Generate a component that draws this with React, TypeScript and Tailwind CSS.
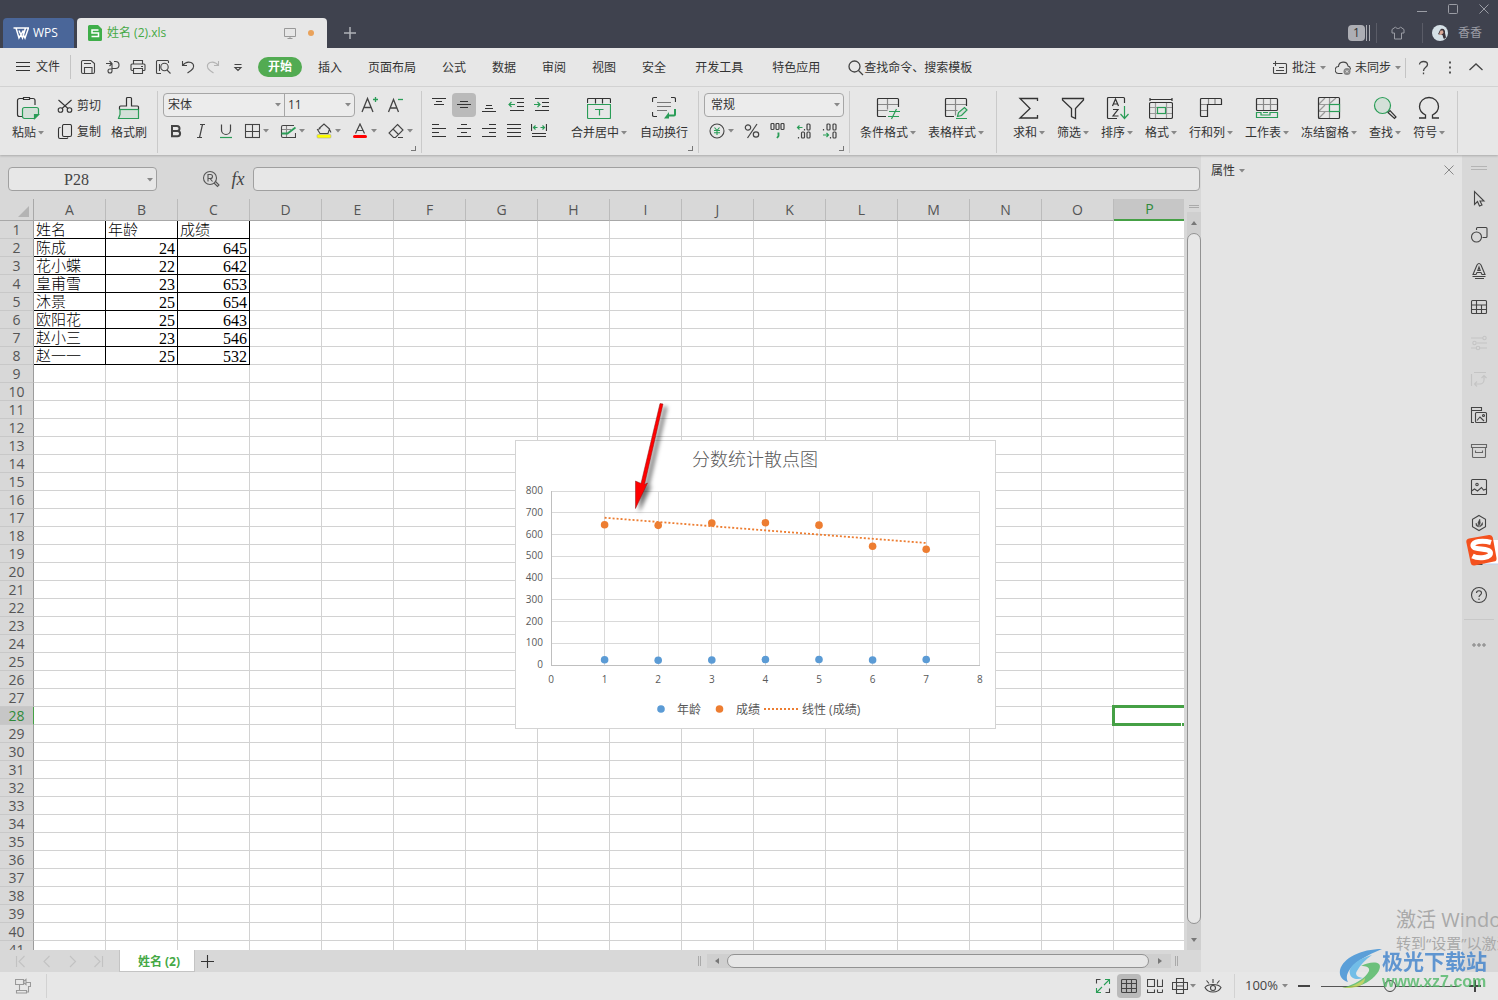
import type { ReactNode } from "react";
import clsx from "clsx";

const GREEN = "#2a9d57";

const tabs = ["插入", "页面布局", "公式", "数据", "审阅", "视图", "安全"];
const extraTabs = ["开发工具", "特色应用"];

const columns = "ABCDEFGHIJKLMNOP".split("");
const rowNumbers = Array.from({ length: 41 }, (_, i) => i + 1);

const records = [
  ["姓名", "年龄", "成绩"],
  ["陈成", 24, 645],
  ["花小蝶", 22, 642],
  ["皇甫雪", 23, 653],
  ["沐景", 25, 654],
  ["欧阳花", 25, 643],
  ["赵小三", 23, 546],
  ["赵一一", 25, 532],
];

type IconProps = { w?: number; h?: number; sw?: number; className?: string; children: ReactNode };

function Icon({ w = 16, h = 16, sw = 1.1, className, children }: IconProps) {
  return (
    <svg
      width={w}
      height={h}
      viewBox={`0 0 ${w} ${h}`}
      fill="none"
      stroke="currentColor"
      strokeWidth={sw}
      className={clsx("shrink-0", className)}
      aria-hidden="true"
    >
      {children}
    </svg>
  );
}

function Caret() {
  return (
    <svg width="6" height="4" viewBox="0 0 6 4" className="shrink-0 text-[#888]" aria-hidden="true">
      <path d="M0 0h6L3 3.5z" fill="currentColor" />
    </svg>
  );
}

/* ---------- ribbon icons, 24 x 24 ---------- */

const big = {
  paste: (
    <Icon w={24} h={24} sw={1.2}>
      <path d="M7 2.5H3.5a2 2 0 0 0-2 2v14a2 2 0 0 0 2 2H6M14 2.5h3a2 2 0 0 1 2 2V9M7.5 1.5h6v2h-6z" />
      <path d="M8.5 11.5h12a2 2 0 0 1 2 2v5l-4 4h-10a2 2 0 0 1-2-2v-7a2 2 0 0 1 2-2z" stroke={GREEN} fill="#d3e0d8" />
      <path d="M22.5 18.5h-4v4z" stroke={GREEN} fill={GREEN} />
    </Icon>
  ),
  brush: (
    <Icon w={24} h={24} sw={1.2}>
      <path d="M3 13v5.5L1.5 22.5h20V13" stroke={GREEN} fill="#d3e0d8" />
      <path d="M2.5 13.5V11a1 1 0 0 1 1-1h6V2.500a1 1 0 0 1 1-1h3a1 1 0 0 1 1 1V10h6a1 1 0 0 1 1 1v2.500" />
      <path d="M2.5 13.5h19" stroke={GREEN} />
    </Icon>
  ),
  merge: (
    <Icon w={24} h={24} sw={1.2}>
      <path d="M0.5 7V3.5a1 1 0 0 1 1-1h21a1 1 0 0 1 1 1V7M8.5 2.5v5M15.5 2.5v5" />
      <path d="M0.5 8.5h23v13a1 1 0 0 1-1 1h-21a1 1 0 0 1-1-1zM8 13.500h8.500M12.500 13.500v6" stroke={GREEN} />
    </Icon>
  ),
  wrap: (
    <Icon w={24} h={24} sw={1.2}>
      <path d="M0.500 6V3a1.500 1.500 0 0 1 1.500-1.500h3M19 1.500h3A1.500 1.500 0 0 1 23.500 3v3M0.500 16v3A1.500 1.500 0 0 0 2 20.500h3" />
      <path d="M5 6.500h14M5 10.500h14M5 14.500h10" stroke="#777" />
      <path d="M23 13v5.500a1 1 0 0 1-1 1h-6" stroke={GREEN} strokeWidth="2" />
      <path d="M17 16v6.500h-5z" fill={GREEN} stroke="none" />
    </Icon>
  ),
  condition: (
    <Icon w={24} h={24} sw={1.2}>
      <path d="M1.500 8.500h21M11.500 2.500v11M1.500 14.500h10" stroke="#888" />
      <path d="M10 20.500H2.500a1 1 0 0 1-1-1v-16a1 1 0 0 1 1-1h19a1 1 0 0 1 1 1V11" />
      <path d="M13 15.500h11M12 20.500h11M20.500 13l-5 10" stroke={GREEN} />
    </Icon>
  ),
  tableStyle: (
    <Icon w={24} h={24} sw={1.2}>
      <path d="M11.500 2.500v17M1.500 8.500h21M1.500 14.500h12" stroke="#888" />
      <path d="M10 20.500H2.500a1 1 0 0 1-1-1v-16a1 1 0 0 1 1-1h19a1 1 0 0 1 1 1V10" />
      <path d="M13.500 20.500l1-4 6-5 2.500 2.500-5.500 5.500zM12 22.500h11" stroke={GREEN} fill="#d3e0d8" />
    </Icon>
  ),
  sum: (
    <Icon w={24} h={24} sw={1.3}>
      <path d="M20.500 5V2.500H3l10 10-10 9.500h17.500V19" />
    </Icon>
  ),
  filter: (
    <Icon w={24} h={24} sw={1.3}>
      <path d="M1.500 2.500h21v1.500l-8 8.500v10l-4-2v-8L1.500 4z" />
    </Icon>
  ),
  sort: (
    <Icon w={24} h={24} sw={1.2}>
      <path d="M12 22.500H3.500a1 1 0 0 1-1-1v-19a1 1 0 0 1 1-1h15a1 1 0 0 1 1 1V7" />
      <path d="M7.500 10l3-7 3 7M8.500 8h4M8 13.500h5l-5 6.500h5.500" />
      <path d="M19.500 10v12M15.500 18l4 4.500 4-4.500" stroke={GREEN} />
    </Icon>
  ),
  format: (
    <Icon w={24} h={24} sw={1.2}>
      <path d="M6.500 7v15M17.500 7v15M1 11.500h22M1 17.500h22" stroke="#999" />
      <path d="M1 3.500h22M1 2v3M23 2v3" />
      <rect x="0.500" y="6.500" width="23" height="16" rx="1.500" />
      <rect x="8.500" y="11.500" width="8" height="6" stroke={GREEN} fill="#e7e7e7" />
    </Icon>
  ),
  rowCol: (
    <Icon w={24} h={24} sw={1.2}>
      <path d="M9.500 2.500v6M16 2.500v6M1.500 8.500h7M1.500 14.500h7" stroke="#888" />
      <path d="M2.500 2.500h19a1 1 0 0 1 1 1v5h-14v12h-6a1 1 0 0 1-1-1v-16a1 1 0 0 1 1-1z" />
    </Icon>
  ),
  worksheet: (
    <Icon w={24} h={24} sw={1.2}>
      <path d="M8.500 2.500v12M15.500 2.500v12M1.500 8.500h21" stroke="#888" />
      <rect x="1.500" y="2.500" width="21" height="12" rx="1" />
      <path d="M1.500 16.500H6v2.500h9v-2.500h7.500v5h-21zM8 16.500h5" stroke={GREEN} />
    </Icon>
  ),
  freeze: (
    <Icon w={24} h={24} sw={1.2}>
      <path d="M12.500 1.500v21M1.500 8.500h21M1.500 15.500h21M2 8l6-6M12 8l7-6M2 15l6-6M2 22l6-6" stroke="#999" />
      <rect x="1.500" y="1.500" width="21" height="21" rx="1" />
      <rect x="12.500" y="8.500" width="10" height="7" stroke={GREEN} fill="#e7e7e7" />
    </Icon>
  ),
  find: (
    <Icon w={24} h={24} sw={1.2}>
      <path d="M15 16.500l6.500 6 1.500-1.500-6-6.500z" />
      <circle cx="9.500" cy="9.500" r="8" stroke={GREEN} fill="#d3e0d8" />
    </Icon>
  ),
  symbol: (
    <Icon w={24} h={24} sw={1.3}>
      <path d="M2 22h6.500v-3C4.500 17 2.500 14 2.500 10.500a9.500 9 0 0 1 19 0c0 3.500-2 6.500-6 8.500v3H22" />
    </Icon>
  ),
};

/* ---------- small toolbar icons, 16 x 16 ---------- */

const small = {
  save: (
    <Icon>
      <path d="M3 1.500h8l3.500 3V13a1.500 1.500 0 0 1-1.500 1.500H3A1.500 1.500 0 0 1 1.500 13V3A1.500 1.500 0 0 1 3 1.500z" />
      <path d="M4.500 14.500v-6h7.500v6M4 4.500h7" />
    </Icon>
  ),
  output: (
    <Icon>
      <path d="M1 4.500h6M4.500 2L7 4.500 4.500 7M9 2.500h1.500a3.500 3.500 0 0 1 0 7H7v2.500a2 2 0 1 1-2-2h2V5" />
    </Icon>
  ),
  print: (
    <Icon>
      <path d="M3.500 5V1.500h9V5M3.500 11.500H2A1 1 0 0 1 1 10.500V6a1 1 0 0 1 1-1h12a1 1 0 0 1 1 1v4.500a1 1 0 0 1-1 1h-1.500" />
      <path d="M3.500 9.500h9v5h-9zM11 7.500h2" />
    </Icon>
  ),
  preview: (
    <Icon>
      <path d="M6 14.500H2.500a1 1 0 0 1-1-1v-11a1 1 0 0 1 1-1h10a1 1 0 0 1 1 1V4M4.500 12V5" />
      <circle cx="9.500" cy="8" r="3.700" />
      <path d="M12 11l3.500 3.500" />
    </Icon>
  ),
  undo: (
    <Icon>
      <path d="M2.500 2v4.500H7M2.500 6.500C5 3.500 8 2.500 11 3.500c3.500 1.500 3.500 5.500 0 8l-3.500 2.500" />
    </Icon>
  ),
  redo: (
    <Icon className="text-[#b4b4b4]">
      <path d="M13.500 2v4.500H9M13.500 6.500C11 3.500 8 2.500 5 3.500c-3.500 1.500-3.500 5.500 0 8l3.500 2.500" />
    </Icon>
  ),
  more: (
    <Icon>
      <path d="M4.500 5.500h7M5 8.500l3 3 3-3z" />
    </Icon>
  ),
  cut: (
    <Icon>
      <circle cx="3.500" cy="12" r="2.300" />
      <circle cx="12.500" cy="12" r="2.300" />
      <path d="M1.500 2l9.500 8.500M14.500 2L5 10.500" />
    </Icon>
  ),
  copy: (
    <Icon>
      <rect x="5.500" y="0.500" width="9" height="12" rx="1.500" />
      <path d="M3.500 3.500H3A1.500 1.500 0 0 0 1.500 5v8A1.500 1.500 0 0 0 3 14.500h6.500a1.500 1.500 0 0 0 1.500-1" />
    </Icon>
  ),
  bold: (
    <Icon sw={2}>
      <path d="M4 3h5a2.400 2.400 0 0 1 0 5H4zM4 8h5.500a2.500 2.500 0 0 1 0 5.200H4z" />
    </Icon>
  ),
  italic: (
    <Icon sw={1.2}>
      <path d="M7 1.500h5M4 14.500h5M9.500 1.500l-3 13" />
    </Icon>
  ),
  underline: (
    <Icon sw={1.2}>
      <path d="M3.500 1.500V7a4.500 4.500 0 0 0 9 0V1.500" />
      <path d="M2 14.500h12" stroke={GREEN} />
    </Icon>
  ),
  borders: (
    <Icon>
      <rect x="1.500" y="1.500" width="14" height="13" />
      <path d="M8.500 1.500v13M1.500 8.500h14" />
    </Icon>
  ),
  drawBorder: (
    <Icon>
      <path d="M6.500 2v12M1.500 6.500H11" stroke="#888" />
      <path d="M14 2.500H3A1.500 1.500 0 0 0 1.500 4v9a1.500 1.500 0 0 0 1.500 1.500h12.500V10" />
      <path d="M1.500 10.500h6l8-6" stroke={GREEN} strokeWidth="1.800" />
    </Icon>
  ),
  fill: (
    <Icon>
      <path d="M3 5.500l5-4.500 5.500 5L12 10.500H4L1.500 6.500l3-1M13.500 6.500l1.500 3" />
      <rect x="1" y="11.500" width="14" height="3.500" rx="1" fill="#ff0" stroke="#aaa" strokeWidth="0.600" />
    </Icon>
  ),
  fontColor: (
    <Icon sw={1.2}>
      <path d="M3.500 10.500L8 1l4.500 9.500M5 7.500h6" />
      <rect x="1" y="12" width="14" height="3" rx="1.500" fill="#f00" stroke="none" />
    </Icon>
  ),
  eraser: (
    <Icon>
      <path d="M9.500 1.500l5.500 5.500-7.500 7.500h-2L1 10zM5 6l5.500 5.500M10 14.500h5" />
    </Icon>
  ),
  yen: (
    <Icon>
      <circle cx="8" cy="8" r="7" />
      <path d="M5.500 4.500L8 7.500l2.500-3M8 7.500V12M5 7.500h6M5 9.800h6" stroke={GREEN} />
    </Icon>
  ),
  percent: (
    <Icon sw={1.2}>
      <circle cx="4" cy="4.500" r="2.700" />
      <circle cx="12" cy="11.500" r="2.700" />
      <path d="M13 1L3.500 15" />
    </Icon>
  ),
  thousands: (
    <Icon sw={1.2}>
      <rect x="1" y="0.500" width="3" height="6" rx="1" />
      <rect x="6" y="0.500" width="3" height="6" rx="1" />
      <rect x="11" y="0.500" width="3" height="6" rx="1" />
      <path d="M7.500 10.500h1v2.500l-1.500 2" stroke={GREEN} strokeWidth="1.800" />
    </Icon>
  ),
  addDecimal: (
    <Icon sw={1.2}>
      <path d="M1.500 4.500h5M3.500 2.500l-2 2 2 2" stroke={GREEN} />
      <path d="M8.500 6v1.500M2.500 14v1.500" />
      <rect x="11" y="1" width="3" height="6" rx="1" />
      <rect x="5.500" y="9" width="3" height="6" rx="1" />
      <rect x="11" y="9" width="3" height="6" rx="1" />
    </Icon>
  ),
  cutDecimal: (
    <Icon sw={1.2}>
      <path d="M1 12h5.500M4.500 10l2 2-2 2" stroke={GREEN} />
      <path d="M1.500 6v1.500M8.500 14v1.500" />
      <rect x="5" y="1" width="3" height="6" rx="1" />
      <rect x="11" y="1" width="3" height="6" rx="1" />
      <rect x="11" y="9" width="3" height="6" rx="1" />
    </Icon>
  ),
};

const line = (d: string, green?: string) => (
  <Icon sw={1.2}>
    <path d={d} />
    {green && <path d={green} stroke={GREEN} />}
  </Icon>
);

const alignTop = [
  { name: "顶端对齐", icon: line("M1 1.500h14M5 4.500h6M3 7.500h10") },
  { name: "垂直居中", icon: line("M1 7.500h14M4 4.500h8M4 10.500h8"), active: true },
  { name: "底端对齐", icon: line("M5 8.500h6M4 11.500h8M1 14.500h14") },
];

const indents = [
  { name: "减少缩进", icon: line("M2 1.500h14M9 5.500h7M9 9.500h7M2 13.500h14", "M1 7.500h6M3.500 5L1 7.500l2.500 2.500") },
  { name: "增加缩进", icon: line("M2 1.500h14M9 5.500h7M9 9.500h7M2 13.500h14", "M1 7.500h6M4.500 5L7 7.500l-2.500 2.500") },
];

const alignBottom = [
  { name: "左对齐", icon: line("M1 1.500h7M1 5.500h14M1 9.500h7M1 13.500h14") },
  { name: "水平居中", icon: line("M5 1.500h6M1 5.500h14M5 9.500h6M1 13.500h14") },
  { name: "右对齐", icon: line("M8 1.500h7M1 5.500h14M8 9.500h7M1 13.500h14") },
  { name: "两端对齐", icon: line("M1 1.500h14M1 5.500h14M1 9.500h14M1 13.500h14") },
  { name: "分散对齐", icon: line("M0.500 1v7M15.500 1v7M1 10.500h14M1 13.500h14", "M2.500 4.500h4M9.500 4.500h4M4.500 2.500l-2 2 2 2M11.500 2.500l2 2-2 2") },
];

const quickAccess = [
  { name: "保存", icon: small.save },
  { name: "输出", icon: small.output },
  { name: "打印", icon: small.print },
  { name: "打印预览", icon: small.preview },
  { name: "撤销", icon: small.undo },
  { name: "恢复", icon: small.redo },
  { name: "更多", icon: small.more },
];

const fontTools = [
  { name: "边框", icon: small.borders },
  { name: "绘制边框", icon: small.drawBorder },
  { name: "填充颜色", icon: small.fill },
  { name: "字体颜色", icon: small.fontColor },
  { name: "清除", icon: small.eraser },
];

const editTools = [
  { label: "求和", icon: big.sum },
  { label: "筛选", icon: big.filter },
  { label: "排序", icon: big.sort },
  { label: "格式", icon: big.format },
  { label: "行和列", icon: big.rowCol },
  { label: "工作表", icon: big.worksheet },
  { label: "冻结窗格", icon: big.freeze },
  { label: "查找", icon: big.find },
  { label: "符号", icon: big.symbol },
];

function TitleBar() {
  return (
    <header className="flex h-12 shrink-0 items-end bg-[#3f424e] pl-[3px] text-xs">
      <button className="flex h-[30px] w-[71px] items-center gap-1 rounded-t bg-[#4a6699] pl-2.5 text-white">
        <Icon w={16} h={14} sw={1.5}>
          <path d="M0.500 2h12L9.500 12 6 4.500M3 2l3 10 4.500-7.500M12 2h3.500L12 12l-2-4" />
        </Icon>
        WPS
      </button>
      <div className="ml-[3px] flex h-[30px] w-[250px] items-center rounded-t bg-[#e7e7e7] pr-[13px] pl-[11px] text-[#45a945]">
        <svg width="14" height="16" viewBox="0 0 14 16" aria-hidden="true">
          <path d="M1.500 0H10l4 4v10.500a1.500 1.500 0 0 1-1.500 1.500h-11A1.500 1.500 0 0 1 0 14.500v-13A1.500 1.500 0 0 1 1.500 0z" fill="#3fae49" />
          <path d="M10.500 5H4v3h6.500v3.500H3.500" fill="none" stroke="#fff" strokeWidth="1.500" />
        </svg>
        <span className="ml-[5px] flex-1">姓名 (2).xls</span>
        <Icon w={12} h={12} sw={1} className="text-[#999]">
          <path d="M0.500 1.500h11v8H0.500zM6 9.500v2M3.500 11.500h5" />
        </Icon>
        <span className="ml-3 size-1.5 rounded-full bg-[#e9a25b]" />
      </div>
      <button aria-label="新建" className="ml-4 flex h-[30px] items-center text-[#b0b2b8]">
        <Icon w={14} h={14} sw={1.5}>
          <path d="M7 1v12M1 7h12" />
        </Icon>
      </button>

      <div className="ml-auto flex h-12 flex-col text-[#9b9da5]">
        <div className="flex h-[18px] items-center justify-end gap-[21px] pr-[9px]">
          <button aria-label="最小化">
            <Icon w={10} h={10} sw={1}>
              <path d="M0 7.500h10" />
            </Icon>
          </button>
          <button aria-label="最大化">
            <Icon w={10} h={10} sw={1}>
              <rect x="0.500" y="0.500" width="9" height="9" rx="1" />
            </Icon>
          </button>
          <button aria-label="关闭">
            <Icon w={10} h={10} sw={1}>
              <path d="M0.500 0.500l9 9M9.500 0.500l-9 9" />
            </Icon>
          </button>
        </div>
        <div className="flex h-[30px] items-center pr-4">
          <span className="flex h-4 w-[17px] items-center justify-center rounded-sm bg-[#adaeb4] text-[#333]">1</span>
          <span className="ml-px h-4 w-1 border-x border-[#adaeb4]" />
          <span className="ml-1.5 h-5 w-px bg-[#5a5c67]" />
          <button aria-label="皮肤" className="ml-3.5">
            <Icon w={14} h={14} sw={1}>
              <path d="M4.500 1L1 3.500V7h2.500v6h7V7H13V3.500L9.500 1C8.500 3 5.500 3 4.500 1z" />
            </Icon>
          </button>
          <span className="ml-[17px] h-5 w-px bg-[#5a5c67]" />
          <button className="ml-[9px] flex items-center gap-2.5">
            <svg width="16" height="16" viewBox="0 0 16 16" aria-hidden="true">
              <circle cx="8" cy="8" r="8" fill="#d5e0e6" />
              <path d="M9 4c2.500-1 4.500 1 4 4l1 4.500-2 1.500c-1-1-1-3-1.500-4L7 9.500 6 9c1-1 1.500-4 3-5z" fill="#3a3238" />
              <path d="M8.500 5.500l2.500 0 .5 2.500-2.500 2-2-.5z" fill="#d9a795" />
            </svg>
            香香
          </button>
        </div>
      </div>
    </header>
  );
}

function MenuBar() {
  return (
    <nav className="flex h-[39px] shrink-0 items-center border-b border-[#d6d6d6] bg-[#e7e7e7] pl-4 text-xs">
      <button className="flex items-center gap-1.5">
        <Icon w={14} h={12}>
          <path d="M0 1.500h14M0 5.500h14M0 9.500h14" />
        </Icon>
        文件
      </button>
      <span className="ml-2.5 h-6 w-px bg-[#c4c4c4]" />
      <div className="ml-1 flex">
        {quickAccess.map(({ name, icon }) => (
          <button key={name} aria-label={name} className="flex h-6 w-[25px] items-center justify-center text-[#444]">
            {icon}
          </button>
        ))}
      </div>
      <button className="ml-2 h-5 w-11 rounded-full bg-[#52ab52] font-bold text-white">开始</button>
      <div className="ml-4 flex gap-[26px] pt-0.5 whitespace-nowrap">
        {tabs.map((tab) => (
          <button key={tab}>{tab}</button>
        ))}
      </div>
      <div className="ml-[29px] flex gap-[29px] pt-0.5 whitespace-nowrap">
        {extraTabs.map((tab) => (
          <button key={tab}>{tab}</button>
        ))}
      </div>
      <label className="ml-7 flex items-center pt-0.5">
        <Icon sw={1.3} className="text-[#444]">
          <circle cx="6.500" cy="6.500" r="5.500" />
          <path d="M10.500 10.500l4.500 4.500" />
        </Icon>
        <input
          aria-label="查找命令"
          placeholder="查找命令、搜索模板"
          className="w-32 bg-transparent outline-none placeholder:text-[#333]"
        />
      </label>
      <div className="ml-auto flex items-center pt-0.5 pr-[15px]">
        <button className="flex items-center gap-1">
          <Icon className="text-[#444]">
            <path d="M6 3.500h7.500a1 1 0 0 1 1 1v8a1 1 0 0 1-1 1h-11a1 1 0 0 1-1-1V7M3.500 1v5M1 3.500h5M4 10.500h8M7 7.500h5" />
          </Icon>
          批注
          <Caret />
        </button>
        <button className="ml-[9px] flex items-center gap-1">
          <Icon className="text-[#444]">
            <path d="M7.500 13.500H4a3.500 3.500 0 0 1-.5-7A4.800 4.800 0 0 1 13 6c2 .5 2.500 2 2.500 3.500" />
            <circle cx="12" cy="11.500" r="3.500" fill="#888" stroke="none" />
            <path d="M10.800 10.300l2.400 2.400M13.200 10.300l-2.400 2.400" stroke="#fff" strokeWidth="0.800" />
          </Icon>
          未同步
          <Caret />
        </button>
        <span className="ml-1 h-5 w-px bg-[#c4c4c4]" />
        <button aria-label="帮助" className="ml-2.5">
          <Icon sw={1.3} className="text-[#444]">
            <path d="M3.500 4.500C3.500 0.500 11.500 0.500 11.500 4.500 11.500 7.500 7.500 7 7.500 11M7.500 12.500v1.800" />
          </Icon>
        </button>
        <button aria-label="更多选项" className="ml-2.5">
          <Icon className="text-[#444]">
            <path d="M8 1.500v2M8 6.500v2M8 11.500v2" strokeWidth="1.800" />
          </Icon>
        </button>
        <button aria-label="折叠功能区" className="ml-[11px]">
          <Icon w={14} h={14} sw={1.3} className="text-[#444]">
            <path d="M0.500 9L7 3l6.500 6" />
          </Icon>
        </button>
      </div>
    </nav>
  );
}

function BigButton({ label, icon, dropdown = true }: { label: string; icon: ReactNode; dropdown?: boolean }) {
  return (
    <button className="flex shrink-0 flex-col items-center pt-[5px]">
      {icon}
      <span className="flex h-6 items-center gap-0.5 pt-0.5 whitespace-nowrap">
        {label}
        {dropdown && <Caret />}
      </span>
    </button>
  );
}

function Corner() {
  return (
    <button aria-label="更多设置" className="absolute right-[5px] bottom-0.5 size-[5px] border-r border-b border-[#777]" />
  );
}

function ToolButton({ name, icon, active }: { name: string; icon: ReactNode; active?: boolean }) {
  return (
    <button aria-label={name} className={clsx("flex size-6 items-center justify-center rounded", active && "bg-[#bababa]")}>
      {icon}
    </button>
  );
}

function Ribbon() {
  const group = "relative mt-1 flex h-[62px] shrink-0 border-r border-[#cacaca]";
  return (
    <section className="z-10 flex h-[68px] shrink-0 bg-[#e7e7e7] text-xs shadow-[0_1px_2px_#aaa]">
      <div className={clsx(group, "w-[158px] pl-3")}>
        <BigButton label="粘贴" icon={big.paste} />
        <div className="ml-[13px] flex shrink-0 flex-col gap-0.5 pt-0.5">
          <button className="flex h-6 items-center gap-1 pt-0.5">{small.cut}剪切</button>
          <button className="flex h-6 items-center gap-1 pt-0.5">{small.copy}复制</button>
        </div>
        <div className="ml-2.5 flex shrink-0">
          <BigButton label="格式刷" icon={big.brush} dropdown={false} />
        </div>
      </div>

      <div className={clsx(group, "w-[264px] flex-col gap-0.5 pt-0.5 pl-[5px]")}>
        <div className="flex h-6 items-center">
          <div className="flex h-6 w-48 rounded border border-[#a6a6a6] bg-[#ececec]">
            <label className="relative flex w-[121px] items-center border-r border-[#a6a6a6]">
              <select aria-label="字体" className="w-full appearance-none bg-transparent pl-1 outline-none">
                <option>宋体</option>
              </select>
              <span className="pointer-events-none absolute right-[3px]"><Caret /></span>
            </label>
            <label className="relative flex flex-1 items-center">
              <select aria-label="字号" className="w-full appearance-none bg-transparent pl-[3px] outline-none">
                <option>11</option>
              </select>
              <span className="pointer-events-none absolute right-[3px]"><Caret /></span>
            </label>
          </div>
          <button aria-label="增大字号" className="ml-1.5">
            <Icon w={18} h={18} sw={1.3} className="text-[#444]">
              <path d="M1 16L6.500 2.500 12 16M3 11.500h7" />
              <path d="M14.500 1v5M12 3.500h5" stroke={GREEN} />
            </Icon>
          </button>
          <button aria-label="减小字号" className="ml-2">
            <Icon w={18} h={18} sw={1.3} className="text-[#444]">
              <path d="M1.500 16L6.500 3.500l5 12.500M3 12h7" />
              <path d="M11 3.500h5" stroke={GREEN} />
            </Icon>
          </button>
        </div>
        <div className="flex h-6 items-center text-[#444]">
          <button aria-label="加粗" className="flex w-[25px] shrink-0 justify-center">{small.bold}</button>
          <button aria-label="倾斜" className="flex w-[25px] shrink-0 justify-center">{small.italic}</button>
          <button aria-label="下划线" className="mr-1.5 flex w-[25px] shrink-0 justify-center">{small.underline}</button>
          {fontTools.map(({ name, icon }) => (
            <button key={name} aria-label={name} className="flex w-9 shrink-0 items-center gap-[3px] last:w-6">
              {icon}
              <Caret />
            </button>
          ))}
        </div>
        <Corner />
      </div>

      <div className={clsx(group, "w-[277px] pl-[5px]")}>
        <div className="flex flex-col gap-0.5 pt-0.5">
          <div className="flex gap-px">
            {alignTop.map((a) => (
              <ToolButton key={a.name} {...a} />
            ))}
            <div className="ml-0.5 flex gap-px">
              {indents.map((a) => (
                <ToolButton key={a.name} {...a} />
              ))}
            </div>
          </div>
          <div className="flex gap-px">
            {alignBottom.map((a) => (
              <ToolButton key={a.name} {...a} />
            ))}
          </div>
        </div>
        <div className="ml-[18px] flex gap-[13px]">
          <BigButton label="合并居中" icon={big.merge} />
          <BigButton label="自动换行" icon={big.wrap} dropdown={false} />
        </div>
        <Corner />
      </div>

      <div className={clsx(group, "w-[151px] flex-col gap-0.5 pt-0.5 pl-[5px]")}>
        <label className="relative flex h-6 w-[140px] items-center rounded border border-[#a6a6a6] bg-[#ececec]">
          <select aria-label="数字格式" className="w-full appearance-none bg-transparent pl-1.5 outline-none">
            <option>常规</option>
          </select>
          <span className="pointer-events-none absolute right-[3px]"><Caret /></span>
        </label>
        <div className="flex h-6 items-center gap-2.5 pl-[5px] text-[#444]">
          <button aria-label="货币" className="flex items-center gap-[3px]">{small.yen}<Caret /></button>
          <button aria-label="百分比">{small.percent}</button>
          <button aria-label="千位分隔">{small.thousands}</button>
          <button aria-label="增加小数位">{small.addDecimal}</button>
          <button aria-label="减少小数位">{small.cutDecimal}</button>
        </div>
        <Corner />
      </div>

      <div className={clsx(group, "w-[147px] gap-3 pl-2.5")}>
        <BigButton label="条件格式" icon={big.condition} />
        <BigButton label="表格样式" icon={big.tableStyle} />
      </div>

      <div className={clsx(group, "w-[461px] gap-3 pl-4")}>
        {editTools.map((tool) => (
          <BigButton key={tool.label} {...tool} />
        ))}
      </div>
    </section>
  );
}

function FormulaBar() {
  return (
    <div className="flex h-11 shrink-0 items-start pt-3 pr-px pl-2">
      <label className="relative flex h-6 w-[149px] items-center rounded border border-[#a0a0a0] bg-[#e7e7e7] pt-0.5">
        <input
          aria-label="名称框"
          defaultValue="P28"
          className="w-full bg-transparent pr-3 text-center font-['Liberation_Serif',serif] text-base leading-5 text-[#444] outline-none"
        />
        <span className="absolute right-[3px]"><Caret /></span>
      </label>
      <button aria-label="浏览公式结果" className="ml-[45px] flex h-6 items-center text-[#555]">
        <Icon w={18} h={18}>
          <circle cx="8" cy="8" r="6.500" />
          <path d="M6 11.500v-7h2.500a2 2 0 0 1 0 4H6M8 8.500l2.500 3" />
          <path d="M12 13l3.500 3.500 1.500-1.500-3.500-3.500" />
        </Icon>
      </button>
      <button
        aria-label="插入函数"
        className="ml-2 h-6 w-5 font-['Liberation_Serif',serif] text-lg leading-6 text-[#444] italic"
      >
        fx
      </button>
      <input
        aria-label="编辑栏"
        className="ml-[5px] h-6 flex-1 rounded border border-[#a0a0a0] bg-[#e7e7e7] px-2 outline-none"
      />
    </div>
  );
}

function Grid() {
  return (
    <table className="w-[1186px] table-fixed border-separate border-spacing-0 text-sm">
      <colgroup>
        <col className="w-[34px]" />
        {columns.map((c) => (
          <col key={c} className="w-[72px]" />
        ))}
      </colgroup>
      <thead>
        <tr className="bg-[#d8d8d8] text-[#555]">
          <th className="h-[22px] border-r border-b border-[#a8a8a8] p-0">
            <svg width="11" height="11" viewBox="0 0 11 11" className="mt-1 mr-1 ml-auto" aria-hidden="true">
              <path d="M11 0v11H0z" fill="#b4b4b4" />
            </svg>
          </th>
          {columns.map((c) => (
            <th
              key={c}
              className={clsx(
                "h-[22px] border-r p-0 leading-5 font-normal",
                c === "P"
                  ? "border-b-2 border-r-[#bbb] border-b-[#45a045] bg-[#c6c6c6] text-[#2f8a3a]"
                  : "border-b border-r-[#bbb] border-b-[#a8a8a8]"
              )}
            >
              {c}
            </th>
          ))}
        </tr>
      </thead>
      <tbody>
        {rowNumbers.map((n) => (
          <tr key={n}>
            <th
              className={clsx(
                "h-[18px] border-r border-b border-b-[#c8c8c8] p-0 leading-[17px] font-normal",
                n === 28 ? "border-r-[#45a045] bg-[#c6c6c6] text-[#2f8a3a]" : "border-r-[#9c9c9c] bg-[#d8d8d8] text-[#555]"
              )}
            >
              {n}
            </th>
            {columns.map((c, i) => {
              const value = records[n - 1]?.[i];
              const selected = c === "P" && n === 28;
              return (
                <td
                  key={c}
                  className={clsx(
                    "h-[18px] border-r border-b whitespace-nowrap",
                    value === undefined ? "border-[#d2d2d2] p-0" : "border-black px-0.5 text-black",
                    typeof value === "number"
                      ? "pt-0.5 pb-0 text-right align-top font-['Liberation_Serif',serif] text-base leading-[15px]"
                      : "py-0 text-[15px] leading-[17px] font-light",
                    selected && "relative"
                  )}
                >
                  {value}
                  {selected && (
                    <span className="absolute -top-0.5 right-px -bottom-0.5 -left-0.5 border-[3px] border-r-0 border-[#45a045]">
                      <span className="absolute -right-px -bottom-[3px] size-1 border-t border-l border-white bg-[#45a045]" />
                    </span>
                  )}
                </td>
              );
            })}
          </tr>
        ))}
      </tbody>
    </table>
  );
}

const chartX = (v: number) => 36 + v * 53.6;
const chartY = (v: number) => 225 - (v * 174) / 800;

function ScatterChart() {
  const points = records.slice(1).map((r, i) => ({ x: i + 1, age: Number(r[1]), score: Number(r[2]) }));
  return (
    <svg
      width="481"
      height="289"
      viewBox="0 0 481 289"
      role="img"
      aria-label="分数统计散点图"
      className="absolute top-[241px] left-[515px]"
    >
      <rect x="0.500" y="0.500" width="480" height="288" fill="#fff" stroke="#d4d4d4" />
      <text x="240" y="26" textAnchor="middle" fontSize="18" fontWeight="300" fill="#595959">分数统计散点图</text>
      <g fill="none" stroke="#d9d9d9" shapeRendering="crispEdges">
        {[1, 2, 3, 4, 5, 6, 7, 8].map((v) => (
          <path key={v} d={`M${chartX(v)} ${chartY(800)}V${chartY(0)}M${chartX(0)} ${chartY(v * 100)}H${chartX(8)}`} />
        ))}
        <path d={`M${chartX(0)} ${chartY(800)}V${chartY(0)}H${chartX(8)}`} stroke="#bfbfbf" />
      </g>
      <g fontSize="10" fill="#595959">
        {[0, 1, 2, 3, 4, 5, 6, 7, 8].map((v) => (
          <g key={v}>
            <text x="28" y={Math.round(chartY(v * 100)) + 3} textAnchor="end">{v * 100}</text>
            <text x={chartX(v)} y="243" textAnchor="middle">{v}</text>
          </g>
        ))}
      </g>
      {points.map((p) => (
        <g key={p.x}>
          <circle cx={chartX(p.x)} cy={chartY(p.age)} r="3.800" fill="#5b9bd5" />
          <circle cx={chartX(p.x)} cy={chartY(p.score)} r="3.800" fill="#ed7d31" />
        </g>
      ))}
      <g stroke="#ed7d31" strokeWidth="1.800" strokeDasharray="2 2">
        <path d={`M${chartX(1)} ${chartY(677)}L${chartX(7)} ${chartY(561)}`} />
        <path d="M249 269h34" />
      </g>
      <circle cx="146" cy="269" r="3.800" fill="#5b9bd5" />
      <circle cx="204.500" cy="269" r="3.800" fill="#ed7d31" />
      <g fontSize="12" fill="#595959">
        <text x="162" y="274">年龄</text>
        <text x="221" y="274">成绩</text>
        <text x="287" y="274">线性 (成绩)</text>
      </g>
    </svg>
  );
}

function PointerArrow() {
  return (
    <svg
      width="50"
      height="124"
      viewBox="0 0 50 124"
      className="absolute top-[200px] left-[625px] drop-shadow-[4px_3px_2px_rgba(0,0,0,0.55)]"
      aria-hidden="true"
    >
      <path d="M35 4.500l3 .5-18.500 80.500 3-1.500L10.500 109.500V82l5.500 2.500z" fill="#f00" stroke="#8c1010" strokeWidth="0.500" />
    </svg>
  );
}

function VerticalScroll() {
  return (
    <div className="flex w-3.5 shrink-0 flex-col items-center">
      <span className="mt-1.5 h-[3px] w-2.5 border-y border-[#aaa]" />
      <div className="mt-1 flex w-full flex-1 flex-col items-center bg-[#cfcfcf]">
        <span className="flex h-[21px] items-center">
          <svg width="6" height="4" viewBox="0 0 6 4" aria-hidden="true"><path d="M0 4h6L3 0z" fill="#777" /></svg>
        </span>
        <span className="w-3.5 flex-1 rounded-full border border-[#929292] bg-[#e7e7e7]" />
        <span className="flex h-[26px] items-center pt-1.5">
          <svg width="6" height="4" viewBox="0 0 6 4" aria-hidden="true"><path d="M0 0h6L3 4z" fill="#777" /></svg>
        </span>
      </div>
    </div>
  );
}

const sheetNav = [
  { name: "第一张", d: "M1.500 1v11M9.500 1L4 6.500l5.500 5.500" },
  { name: "上一张", d: "M8.500 1L3 6.500l5.500 5.500" },
  { name: "下一张", d: "M3 1l5.500 5.500L3 12" },
  { name: "最后一张", d: "M1.500 1L7 6.500 1.500 12M9.500 1v11" },
];

function SheetTabs() {
  return (
    <div className="flex h-[22px] shrink-0 text-xs">
      <div className="flex w-[119px] items-center gap-[15px] pl-[15px] text-[#c2c2c2]">
        {sheetNav.map(({ name, d }) => (
          <button key={name} aria-label={name}>
            <Icon w={11} h={13}>
              <path d={d} />
            </Icon>
          </button>
        ))}
      </div>
      <button className="h-[22px] w-[76px] border border-t-0 border-[#c4c4c4] bg-white pt-0.5 pl-1 font-bold text-[#45a945]">
        姓名 (2)
      </button>
      <button aria-label="新建工作表" className="ml-1.5 flex items-center">
        <Icon w={13} h={13}>
          <path d="M6.500 0v13M0 6.500h13" />
        </Icon>
      </button>
      <div className="ml-auto flex w-[503px] items-center">
        <span className="h-2.5 w-[3px] border-x border-[#aaa]" />
        <div className="ml-1.5 flex h-3.5 flex-1 items-center bg-[#cfcfcf]">
          <span className="flex w-5 justify-center">
            <svg width="4" height="6" viewBox="0 0 4 6" aria-hidden="true"><path d="M4 0v6L0 3z" fill="#777" /></svg>
          </span>
          <span className="h-3.5 flex-1 rounded-full border border-[#929292] bg-[#e7e7e7]" />
          <span className="flex w-[22px] justify-center">
            <svg width="4" height="6" viewBox="0 0 4 6" aria-hidden="true"><path d="M0 0v6l4-3z" fill="#777" /></svg>
          </span>
        </div>
        <span className="mr-[23px] ml-1 h-2.5 w-[3px] border-x border-[#aaa]" />
      </div>
    </div>
  );
}

const railTools = [
  { name: "选择", icon: <path d="M4.500 1.500v13l3-3 2 4.500 2.500-1-2-4h4z" /> },
  { name: "形状", icon: <><circle cx="6.500" cy="11" r="5" /><path d="M6.500 4V2.500a1 1 0 0 1 1-1h8.500a1 1 0 0 1 1 1v8a1 1 0 0 1-1 1h-3.500" /></> },
  { name: "艺术字", icon: <path d="M3 12.500L7 3q2-3 4 0l4 9.500h-3l-1-2H7l-1 2zM7.800 8.500L9 5l1.200 3.500zM2.500 14.500h13M5 16.500h9" /> },
  { name: "表格", icon: <><rect x="1.500" y="2.500" width="15" height="13" rx="1" /><path d="M1.500 7h15M1.500 11.500h15M6.500 2.500v13M11.500 7v8.500" /></> },
  { name: "设置", off: true, icon: <><path d="M1 4h12M7 9h10M1 14h5M10 14h7" /><circle cx="14.500" cy="4" r="1.700" /><circle cx="4.500" cy="9" r="1.700" /><circle cx="8" cy="14" r="1.700" /></> },
  { name: "旋转", off: true, icon: <path d="M4 2.500h12M1.500 4v12M14 6v4a4 4 0 0 1-4 4H5M11.500 8L14 5.500 16.500 8M7 11.500L4.500 14 7 16.500" /> },
  { name: "图片库", icon: <><path d="M4 16.500H1.500v-15h10V5M1.500 4.500h10" /><rect x="5.500" y="6.500" width="11" height="10" rx="1" /><path d="M7 14.500l3-3.500 4 4" /><circle cx="13.500" cy="9.500" r="1" /></> },
  { name: "备份", icon: <path d="M1.500 2.500h15v3h-15zM2.500 5.500v9a1 1 0 0 0 1 1h11a1 1 0 0 0 1-1v-9M5.500 8.500v2h7v-2" stroke="#666" /> },
  { name: "图片", icon: <><rect x="1.500" y="1.500" width="15" height="15" rx="1" /><circle cx="7" cy="6.500" r="1.200" /><path d="M1.500 13l3-2 3 2 4-3.500 2 2.500 3-1" /></> },
  { name: "环保", icon: <><path d="M9 1.500l6.500 3.700v7.600L9 16.500l-6.500-3.700V5.200z" /><path d="M8.800 12.500l-.8-4 1.800-3.500.5 4zM8.500 13L6 11.500V9zM9.500 13l3-2V8.500z" fill="currentColor" strokeWidth="0.500" /></> },
  { name: "灵感", icon: <path d="M9 2.500v5M6.500 14.500h6" /> },
  { name: "帮助", icon: <><circle cx="9" cy="9" r="7.500" /><path d="M6.500 7c0-3 5-3 5 0 0 2-2.500 2-2.500 4M9 12.500V14" /></> },
];

function ToolRail() {
  return (
    <aside className="relative flex w-9 shrink-0 flex-col items-center bg-[#d8d8d8] pr-0.5 text-[#444]">
      <div className="flex h-[26px] items-center">
        <span className="h-1 w-4 border-y border-[#b4b4b4]" />
      </div>
      {railTools.map(({ name, icon, off }) => (
        <button key={name} aria-label={name} className={clsx("flex h-9 w-8 items-center justify-center", off && "text-[#c4c4c4]")}>
          <Icon w={18} h={18}>{icon}</Icon>
        </button>
      ))}
      <span className="mt-1.5 h-px w-[30px] bg-[#c8c8c8]" />
      <button aria-label="更多" className="mt-[21px] text-[#777]">
        <Icon w={14} h={8} sw={1}>
          <circle cx="2" cy="4" r="1.200" />
          <circle cx="7" cy="4" r="1.200" />
          <circle cx="12" cy="4" r="1.200" />
        </Icon>
      </button>
      {/* input method badge floats over the rail */}
      <svg width="33" height="32" viewBox="0 0 33 32" className="absolute top-[379px] right-0" aria-hidden="true">
        <path d="M20 6h13v24H20z" fill="#fff" />
        <path d="M20 30h13" stroke="#b9cdf0" />
        <path d="M4 4.500L24 1q3-.5 3.800 2.500L31.500 24q.5 3-2.500 3.600L9.500 31.500Q6.500 32 5.700 29L1.300 8Q1 5 4 4.500z" fill="#f4511e" />
        <path d="M26 8.500C18 6 7 7 8 12c1 4.500 17 1.500 17.500 7 .5 4.500-11.500 6.500-18 3" fill="none" stroke="#fff" strokeWidth="5" />
      </svg>
    </aside>
  );
}

function StatusBar() {
  return (
    <footer className="flex h-7 shrink-0 items-center bg-[#e7e7e7] text-[13px] text-[#444]">
      <button aria-label="录制" className="ml-[15px] text-[#999]">
        <Icon w={16} h={16}>
          <path d="M0.500 1.500h8v5h-8zM8.500 3.500l2.500-2v5l-2.500-2M4.500 6.500v6M1.500 12.500h10v2.500h-10zM11.500 4.500h4v4h-2v5.500h-2" />
        </Icon>
      </button>
      <span className="ml-[15px] h-6 w-px bg-[#d2d2d2]" />
      <div className="ml-auto flex items-center">
        <button aria-label="全屏" className="flex size-6 items-center justify-center">
          <Icon>
            <path d="M1.500 5.500v-4h4M14.500 10.500v4h-4" />
            <path d="M10 1.500h4.500V6M14.500 1.500L9 7M6 14.500H1.500V10M1.500 14.500L7 9" stroke={GREEN} />
          </Icon>
        </button>
        <button aria-label="普通视图" className="ml-0.5 flex size-6 items-center justify-center rounded bg-[#bababa]">
          <Icon>
            <rect x="0.500" y="1.500" width="15" height="13" rx="1" />
            <path d="M5.500 1.500v13M10.500 1.500v13M0.500 5.500h15M0.500 10.500h15" />
          </Icon>
        </button>
        <button aria-label="分页预览" className="ml-0.5 flex size-6 items-center justify-center">
          <Icon>
            <path d="M0.500 1.500h7v7h-7zM10.500 1.500v7h5v-7M0.500 11.500v3h7v-3M10.500 11.500v3M10.500 14.500h5M15.500 11.500v3" />
          </Icon>
        </button>
        <button aria-label="页面布局视图" className="ml-[5px] flex items-center gap-0.5">
          <Icon>
            <path d="M4.500 4.500v-4h7v4M4.500 11.500v4h7v-4M0.500 4.500h15v7h-15zM4.500 4.500v7M11.500 4.500v7M4.500 8h7" />
          </Icon>
          <Caret />
        </button>
        <button aria-label="护眼模式" className="ml-2">
          <Icon w={18} h={16}>
            <path d="M1 9.500C4 5.500 14 5.500 17 9.500 14 15.500 4 15.500 1 9.500zM9 1v4M2.500 2.500l2.500 3M15.500 2.500l-2.500 3" />
            <circle cx="9" cy="10" r="2.500" />
          </Icon>
        </button>
        <span className="ml-3 h-6 w-px bg-[#d2d2d2]" />
        <button className="ml-2.5 flex w-[43px] items-center gap-1">
          100%
          <Caret />
        </button>
        <button aria-label="缩小" className="ml-2.5">
          <Icon w={12} h={12} sw={2}>
            <path d="M0 6h12" />
          </Icon>
        </button>
        <input
          type="range"
          aria-label="缩放"
          defaultValue={50}
          className="ml-[11px] h-px w-[138px] appearance-none bg-[#555] [&::-webkit-slider-thumb]:size-3 [&::-webkit-slider-thumb]:appearance-none [&::-webkit-slider-thumb]:rounded-full [&::-webkit-slider-thumb]:border [&::-webkit-slider-thumb]:border-[#444] [&::-webkit-slider-thumb]:bg-[#e7e7e7]"
        />
        <button aria-label="放大" className="mr-[17px] ml-2.5">
          <Icon w={12} h={12} sw={2}>
            <path d="M0 6h12M6 0v12" />
          </Icon>
        </button>
      </div>
    </footer>
  );
}

function SiteMark() {
  return (
    <div className="pointer-events-none absolute right-[11px] bottom-2 flex opacity-80">
      <svg width="44" height="42" viewBox="0 0 44 42" aria-hidden="true">
        <path d="M43 1C22 1 4 10 1 22c-1 6 2 10 8 12-4-8 2-20 34-33z" fill="#3a8fd6" />
        <path d="M33 7C18 11 9 19 11 26c1 5 7 6 13 4-7-1-8-4-6-7 3-6 8-11 15-16z" fill="#56b4e8" />
        <path d="M22 18c6-3 14-5 18-2 3 3-1 11-10 17-6 4-13 7-27 7 12-3 24-10 27-17 1-4-3-5-8-5z" fill="#4fb862" />
        <path d="M3 40c10-1 18-5 23-10 0 5-4 8-9 9-4 1-9 1-14 1z" fill="#b6cf4a" />
      </svg>
      <div className="-ml-px flex flex-col pt-0.5">
        <span className="text-[21px] leading-[22px] font-bold text-[#3f82cc]">极光下载站</span>
        <span className="font-['Liberation_Sans',sans-serif] text-base leading-5 font-bold text-[#52b868]">www.xz7.com</span>
      </div>
    </div>
  );
}

export default function App() {
  return (
    <div className="relative flex h-screen flex-col overflow-hidden bg-[#d8d8d8] font-['Open_Sans','Noto_Sans_CJK_SC',sans-serif] text-[#333]">
      <TitleBar />
      <MenuBar />
      <Ribbon />

      <main className="flex min-h-0 flex-1">
        <section className="flex min-w-0 flex-1 flex-col">
          <FormulaBar />
          <div className="flex min-h-0 flex-1">
            <div className="relative mr-[3px] min-w-0 flex-1 overflow-hidden bg-white">
              <Grid />
              <ScatterChart />
              <PointerArrow />
            </div>
            <VerticalScroll />
          </div>
          <SheetTabs />
        </section>

        <aside className="flex w-[261px] shrink-0 items-start justify-between bg-[#e4e4e4] pt-2 pr-2 pl-2.5 text-xs">
          <button className="flex items-center gap-1">
            属性
            <Caret />
          </button>
          <button aria-label="关闭" className="mt-0.5 text-[#888]">
            <Icon w={10} h={10} sw={1}>
              <path d="M0.500 0.500l9 9M9.500 0.500l-9 9" />
            </Icon>
          </button>
        </aside>

        <ToolRail />
      </main>

      <StatusBar />

      {/* system notice, runs past the right edge of the window */}
      <div className="pointer-events-none absolute right-0 bottom-12 w-[102px] overflow-hidden whitespace-nowrap text-[#a9a9a9]">
        <p className="text-xl leading-7">激活 Windows</p>
        <p className="text-[15px] leading-[18px]">转到“设置”以激活</p>
      </div>
      <SiteMark />
    </div>
  );
}
